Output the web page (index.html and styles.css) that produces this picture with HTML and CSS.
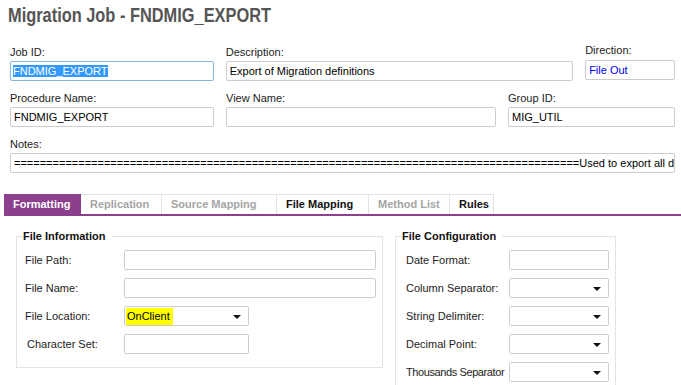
FILE: index.html
```html
<!DOCTYPE html>
<html lang="en">
<head>
    <meta charset="UTF-8">
    <title>Migration Job - FNDMIG_EXPORT</title>
    <link rel="stylesheet" href="styles.css">
</head>
<body>
    <div class="page">
        <h1 class="title"><span>Migration Job - FNDMIG_EXPORT</span></h1>

        <!-- header fields -->
        <div class="row">
            <div class="field f-jobid">
                <label>Job ID:</label>
                <div class="box focused"><span class="selected">FNDMIG_EXPORT</span></div>
            </div>
            <div class="field f-desc">
                <label>Description:</label>
                <div class="box">Export of Migration definitions</div>
            </div>
            <div class="field f-dir">
                <label>Direction:</label>
                <div class="box link">File Out</div>
            </div>
        </div>

        <div class="row">
            <div class="field f-proc">
                <label>Procedure Name:</label>
                <div class="box">FNDMIG_EXPORT</div>
            </div>
            <div class="field f-view">
                <label>View Name:</label>
                <div class="box"></div>
            </div>
            <div class="field f-group">
                <label>Group ID:</label>
                <div class="box">MIG_UTIL</div>
            </div>
        </div>

        <div class="row">
            <div class="field f-notes">
                <label>Notes:</label>
                <div class="box clip">========================================================================================Used to export all d</div>
            </div>
        </div>
    </div>

    <!-- tabs -->
    <ul class="tabs">
        <li class="tab active">Formatting</li>
        <li class="tab disabled">Replication</li>
        <li class="tab disabled">Source Mapping</li>
        <li class="tab">File Mapping</li>
        <li class="tab disabled">Method List</li>
        <li class="tab">Rules</li>
    </ul>

    <div class="panels">
        <fieldset class="group info">
            <legend>File Information</legend>
            <div class="line">
                <label>File Path:</label>
                <div class="box wide"></div>
            </div>
            <div class="line">
                <label>File Name:</label>
                <div class="box wide"></div>
            </div>
            <div class="line">
                <label>File Location:</label>
                <div class="box select short"><span class="marked">OnClient</span><i class="arrow"></i></div>
            </div>
            <div class="line">
                <label class="indent">Character Set:</label>
                <div class="box short"></div>
            </div>
        </fieldset>

        <fieldset class="group config">
            <legend>File Configuration</legend>
            <div class="line">
                <label>Date Format:</label>
                <div class="box narrow"></div>
            </div>
            <div class="line">
                <label>Column Separator:</label>
                <div class="box select narrow"><i class="arrow"></i></div>
            </div>
            <div class="line">
                <label>String Delimiter:</label>
                <div class="box select narrow"><i class="arrow"></i></div>
            </div>
            <div class="line">
                <label>Decimal Point:</label>
                <div class="box select narrow"><i class="arrow"></i></div>
            </div>
            <div class="line">
                <label class="tight">Thousands Separator</label>
                <div class="box select narrow"><i class="arrow"></i></div>
            </div>
        </fieldset>
    </div>
</body>
</html>
```

FILE: styles.css
```css
html, body {
    margin: 0;
    padding: 0;
    background: #fff;
    overflow: hidden;
}
body {
    font-family: "Liberation Sans", Arial, sans-serif;
    font-size: 11px;
    color: #222;
}
.page {
    padding: 0 6px 0 10px;
}
.title {
    margin: 0 0 15px -2px;
    height: 30px;
    font-size: 21px;
    line-height: 30px;
    font-weight: bold;
    color: #555;
}
.title span {
    display: inline-block;
    transform: scaleX(0.78);
    transform-origin: left center;
    white-space: nowrap;
}

.row {
    display: flex;
    gap: 12px;
    margin-bottom: 10px;
}
.field label {
    display: block;
    height: 14px;
    line-height: 14px;
    margin-bottom: 2px;
}
.box {
    box-sizing: border-box;
    height: 20px;
    line-height: 18px;
    border: 1px solid #cdcdcd;
    border-radius: 2px;
    padding: 0 3px;
    color: #000;
    white-space: nowrap;
    overflow: hidden;
    background: #fff;
}
.box.focused { border-color: #84b7e6; padding-left: 2px; }
.selected { background: #3399ff; color: #fff; }
.link { color: #0000ee; }
.clip { overflow: hidden; }

.f-jobid, .f-proc { width: 204px; }
.f-desc { width: 348px; }
.f-dir { width: 90px; }
.f-dir label { margin-top: -2px; margin-bottom: 3px; }
.f-view { width: 270px; }
.f-group { width: 167px; }
.f-notes { width: 665px; }

/* tab strip */
.tabs {
    display: flex;
    list-style: none;
    margin: 21px 0 0 4px;
    padding: 0;
    border-bottom: 2px solid #8b3f8d;
}
.tab {
    box-sizing: border-box;
    height: 20px;
    line-height: 19px;
    padding: 0 9px;
    border: 1px solid #e2e2e2;
    border-bottom: none;
    border-left: none;
    font-weight: bold;
    color: #111;
}
.tab.active {
    background: #8b3f8d;
    border-color: #8b3f8d;
    color: #fff;
}
.tab.disabled { color: #a5a5a5; }
.tab:nth-child(1) { width: 77px; }
.tab:nth-child(2) { width: 81px; }
.tab:nth-child(3) { width: 115px; }
.tab:nth-child(4) { width: 92px; }
.tab:nth-child(5) { width: 81px; }
.tab:nth-child(6) { width: 44px; }

/* group boxes */
.panels {
    display: flex;
    align-items: flex-start;
    gap: 12px;
    padding: 13px 0 0 16px;
}
.group {
    margin: 0;
    border: 1px solid #e3e3e3;
    padding: 7px 6px 13px 8px;
    display: flex;
    flex-direction: column;
    gap: 8px;
}
.group legend {
    font-weight: bold;
    color: #111;
    line-height: 14px;
    padding: 0 6px 0 0;
    margin-left: -2px;
}
.info { width: 366px; box-sizing: border-box; }
.config { width: 221px; box-sizing: border-box; padding-left: 10px; }
.config legend { margin-left: -4px; }
.line {
    display: flex;
    align-items: center;
    height: 20px;
}
.line label { flex: 0 0 auto; white-space: nowrap; }
.info .line label { width: 99px; }
.config .line label { width: 103px; }
.config .line label.tight { letter-spacing: -0.4px; }
.indent { padding-left: 2px; margin-right: -2px; }
.wide { width: 252px; }
.short { width: 125px; }
.narrow { width: 100px; flex: 0 0 auto; }

.select { position: relative; padding-left: 1px; }
.marked { background: #ffff00; padding: 2px 3px 3px 1px; }
.arrow {
    position: absolute;
    right: 7px;
    top: 8px;
    border-left: 4px solid transparent;
    border-right: 4px solid transparent;
    border-top: 4px solid #111;
}
```
